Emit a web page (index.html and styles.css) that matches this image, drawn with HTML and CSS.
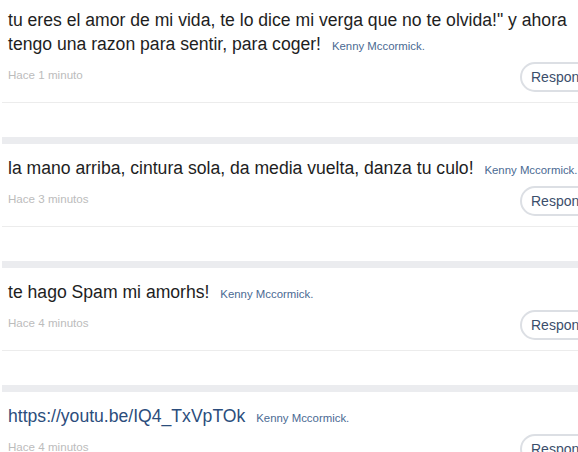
FILE: index.html
```html
<!DOCTYPE html>
<html lang="es">
<head>
    <meta charset="UTF-8">
    <meta name="viewport" content="width=device-width, initial-scale=1.0">
    <title>Comentarios</title>
    <link rel="stylesheet" href="styles.css">
</head>
<body>
    <div class="comentarios">
        <div class="comentario primero">
            <p class="mensaje">tu eres el amor de mi vida, te lo dice mi verga que no te olvida!&quot; y ahora tengo una razon para sentir, para coger! <a class="autor" href="#">Kenny Mccormick.</a></p>
            <div class="meta">
                <span class="tiempo">Hace 1 minuto</span>
                <button class="responder">Responder</button>
            </div>
        </div>

        <div class="comentario">
            <p class="mensaje">la mano arriba, cintura sola, da media vuelta, danza tu culo! <a class="autor" href="#">Kenny Mccormick.</a></p>
            <div class="meta">
                <span class="tiempo">Hace 3 minutos</span>
                <button class="responder">Responder</button>
            </div>
        </div>

        <div class="comentario">
            <p class="mensaje">te hago Spam mi amorhs! <a class="autor" href="#">Kenny Mccormick.</a></p>
            <div class="meta">
                <span class="tiempo">Hace 4 minutos</span>
                <button class="responder">Responder</button>
            </div>
        </div>

        <div class="comentario">
            <p class="mensaje"><a class="enlace" href="#">https://youtu.be/IQ4_TxVpTOk</a> <a class="autor" href="#">Kenny Mccormick.</a></p>
            <div class="meta">
                <span class="tiempo">Hace 4 minutos</span>
                <button class="responder">Responder</button>
            </div>
        </div>
    </div>
</body>
</html>
```

FILE: styles.css
```css
body {
    margin: 0;
    font-family: "Liberation Sans", Arial, sans-serif;
    background-color: #fff;
    overflow: hidden;
}
.comentarios {
    width: 620px;
    margin-left: 2px;
}
.comentario {
    border-top: 7px solid #ebecef;
    padding: 12px 6px 0;
    margin-bottom: 34px;
}
.comentario::after {
    content: "";
    display: block;
    height: 1px;
    margin: 10px -6px 0;
    background-color: #ececec;
}
.primero {
    border-top: none;
    padding-top: 8px;
}
.mensaje {
    max-width: 570px;
    margin: 0;
    font-size: 17.6px;
    line-height: 24px;
    color: #1e1e1e;
}
.autor {
    font-size: 11.4px;
    line-height: 1;
    color: #4a6a93;
    text-decoration: none;
    margin-left: 6px;
}
.enlace {
    color: #2b4d7c;
    text-decoration: none;
}
.meta {
    display: flex;
    justify-content: space-between;
    align-items: flex-start;
    margin-top: 6px;
}
.tiempo {
    font-size: 11.6px;
    color: #bcbcbc;
    padding-top: 6px;
}
.responder {
    width: 96px;
    height: 30px;
    padding: 0 0 0 9px;
    text-align: left;
    font-family: inherit;
    font-size: 14px;
    color: #3b4e6b;
    background-color: #fff;
    border: 2px solid #dcdfe4;
    border-radius: 15px;
    cursor: pointer;
}
```
